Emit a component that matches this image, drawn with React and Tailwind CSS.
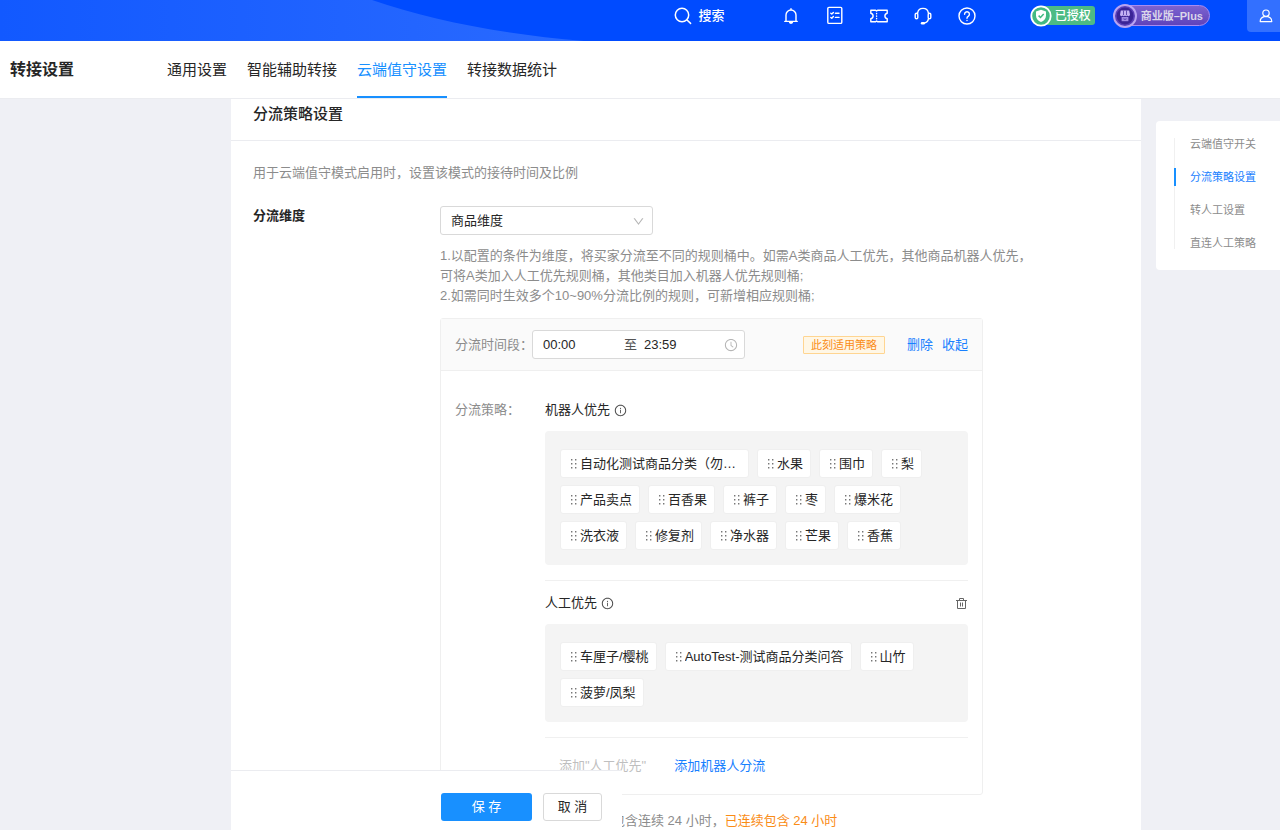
import React, { useState } from "react";
import { AiOutlineInfoCircle, AiOutlineDown, AiOutlineClockCircle } from "react-icons/ai";

const tabs = ["通用设置", "智能辅助转接", "云端值守设置", "转接数据统计"];
const anchors = ["云端值守开关", "分流策略设置", "转人工设置", "直连人工策略"];
const robotTags = [
  "自动化测试商品分类（勿动）", "水果", "围巾", "梨",
  "产品卖点", "百香果", "裤子", "枣", "爆米花",
  "洗衣液", "修复剂", "净水器", "芒果", "香蕉",
];
const humanTags = ["车厘子/樱桃", "AutoTest-测试商品分类问答", "山竹", "菠萝/凤梨"];

function HeaderIcon({ label, children }) {
  return (
    <button type="button" aria-label={label} className="flex h-5 w-5 items-center justify-center text-white">
      <svg viewBox="0 0 20 20" className="h-5 w-5" fill="none" stroke="currentColor" strokeWidth="1.4" strokeLinecap="round" strokeLinejoin="round">
        {children}
      </svg>
    </button>
  );
}

function TopBar() {
  return (
    <header className="relative flex h-[41px] shrink-0 items-start justify-end overflow-hidden bg-[#004bff]">
      <svg className="absolute left-0 top-0 h-[41px] w-[600px]" viewBox="0 0 600 41" aria-hidden="true">
        <defs>
          <linearGradient id="wave" x1="0" x2="1" y1="0" y2="0">
            <stop offset="0" stopColor="#1259ff" />
            <stop offset="1" stopColor="#2a6aff" />
          </linearGradient>
        </defs>
        <path d="M0 0H372C430 20 500 34 584 41H0Z" fill="url(#wave)" />
      </svg>
      <div className="relative flex h-[31px] items-center">
        <button type="button" className="mr-[56px] flex items-center gap-1.5 text-[13px] font-medium text-white">
          <svg viewBox="0 0 20 20" className="h-5 w-5" fill="none" stroke="currentColor" strokeWidth="1.5" strokeLinecap="round" aria-hidden="true">
            <circle cx="9" cy="9" r="6.7" />
            <path d="M14 14l3.6 3.4" />
          </svg>
          搜索
        </button>
        <div className="flex items-center gap-6">
          <HeaderIcon label="通知">
            <path d="M3.8 15.4H16.2M5 15.2V9A5 5 0 0 1 15 9V15.2M10 3.8V2.8" />
            <path d="M8.4 15.6a1.6 1.6 0 0 0 3.2 0Z" fill="currentColor" />
          </HeaderIcon>
          <HeaderIcon label="任务">
            <rect x="2.8" y="1.4" width="14" height="16" rx="1.2" />
            <path d="M5.8 7.2l1 .9 1.6-1.7M5.8 11.4l1 .9 1.6-1.7M10.4 7.2h3.6M10.4 11.4h3.6" />
          </HeaderIcon>
          <HeaderIcon label="优惠券">
            <path d="M1.8 4.200H6.600l1 .9 1-.9h9.600v3c-1.500.4-2.300 1.500-2.300 2.800s.8 2.400 2.300 2.800v3H8.600l-1-.9-1 .9H1.800v-3c1.500-.4 2.300-1.500 2.300-2.800s-.8-2.400-2.300-2.800Z" />
            <path d="M7.600 7.400v.3M7.600 9.900v.3M7.600 12.400v.3" />
          </HeaderIcon>
          <HeaderIcon label="客服">
            <path d="M4.600 7.200C5 4.200 7.200 2.400 10 2.400s5 1.800 5.400 4.800M15.400 12.800c-.4 2.200-1.900 3.900-4.400 4.300" />
            <rect x="2.200" y="7.200" width="2.600" height="5.600" rx="1.300" />
            <rect x="15.200" y="7.200" width="2.600" height="5.600" rx="1.300" />
            <path d="M9 17.200h1.800" strokeWidth="2.400" />
          </HeaderIcon>
          <HeaderIcon label="帮助">
            <circle cx="10" cy="10" r="8" />
            <path d="M7.600 8.200a2.400 2.400 0 1 1 3.600 2.100c-.8.500-1.200.9-1.200 1.900M10 14.400v.2" />
          </HeaderIcon>
        </div>
        <div className="relative ml-[53px] flex h-[22px] items-center">
          <svg viewBox="0 0 22 22" className="relative z-10 h-[22px] w-[22px]" aria-hidden="true">
            <circle cx="11" cy="11" r="9.700" fill="#42b983" stroke="#fff" strokeWidth="1.800" />
            <path d="M11 4.800l5 1.700v4.200c0 3-2 5-5 6.300-3-1.300-5-3.300-5-6.300V6.500Z" fill="#fff" />
            <path d="M8.600 10.600l1.900 1.900 3.200-3.400" fill="none" stroke="#42b983" strokeWidth="1.500" />
          </svg>
          <span className="-ml-2 flex h-[19px] items-center rounded-r-[3px] bg-[#4dbb84] pl-[11px] pr-1 text-[12px] font-medium text-white">已授权</span>
        </div>
        <div className="ml-[18px] flex h-6 items-center">
          <svg viewBox="0 0 24 24" className="relative z-10 h-6 w-6" aria-hidden="true">
            <circle cx="12" cy="12" r="11" fill="#5a40b8" stroke="#b8a4f2" strokeWidth="2" />
            <circle cx="12" cy="12" r="8.400" fill="#3a2496" />
            <path d="M7.800 6.600h8.400l.8 4.200a1.400 1.400 0 0 1-2.500.8 1.500 1.500 0 0 1-2.500 0 1.500 1.500 0 0 1-2.500 0 1.400 1.400 0 0 1-2.500-.8Z" fill="#c4b2f4" />
            <path d="M8.600 13h6.800v4.200H8.600Z" fill="#a08be4" />
            <path d="M10.500 6.600v4.600M13.500 6.600v4.600" stroke="#3a2496" strokeWidth=".7" />
            <path d="M10.500 14.800q1.500 1.200 3 0" fill="none" stroke="#3a2496" strokeWidth=".8" />
          </svg>
          <span className="-ml-3 flex h-[21px] items-center rounded-r-full border border-[#a98bf0] bg-linear-to-b from-[#7d63cf] to-[#5f43bb] pl-[15px] pr-1.5 text-[11px] font-bold text-[#dad5ea]">商业版–Plus</span>
        </div>
        <button type="button" aria-label="用户" className="ml-[37px] flex h-8 w-[33px] items-center justify-center self-start rounded-bl bg-[#3370ff] pl-1 text-white">
          <svg viewBox="0 0 16 16" className="h-4 w-4" fill="none" stroke="currentColor" strokeWidth="1.200" strokeLinejoin="round" aria-hidden="true">
            <circle cx="8" cy="5.200" r="3.200" />
            <path d="M2.200 13.600c0-2.600 1.800-4.400 3.900-5h3.800c2.100.6 3.900 2.400 3.900 5Z" />
          </svg>
        </button>
      </div>
    </header>
  );
}

function Tag({ text }) {
  return (
    <li className="flex h-[29px] items-center gap-[2px] rounded-[3px] border border-[#efefef] bg-white pl-[9px] pr-[7px] pt-px text-[13px] text-[#262626]">
      <svg viewBox="0 0 8 10" className="h-2.5 w-2 shrink-0" fill="#777" aria-hidden="true">
        <path d="M1 0h1.400v1.400H1zM5 0h1.400v1.400H5zM1 4h1.400v1.400H1zM5 4h1.400v1.400H5zM1 8h1.400v1.400H1zM5 8h1.400v1.400H5z" />
      </svg>
      <span className="max-w-[161px] truncate">{text}</span>
    </li>
  );
}

function TagGroup({ title, tags, removable }) {
  return (
    <section className="mb-[15px] border-b border-[#f0f0f0] pb-[15px]">
      <div className="flex h-[14px] items-center justify-between">
        <h3 className="flex items-center gap-1 text-[13px] text-[#262626]">
          {title}
          <AiOutlineInfoCircle className="h-[13px] w-[13px] text-[#444]" />
        </h3>
        {removable && (
          <button type="button" aria-label="删除分组" className="text-[#666]">
            <svg viewBox="0 0 13 13" className="h-[13px] w-[13px]" fill="none" stroke="currentColor" aria-hidden="true">
              <path d="M1 3.500h11M4.500 3.500v-2h4v2M2.500 3.500v8h8v-8M5.500 5.500v4M7.500 5.500v4" />
            </svg>
          </button>
        )}
      </div>
      <ul className="mt-[14px] flex flex-wrap gap-x-2 gap-y-[7px] rounded bg-[#f4f4f4] px-[15px] pb-[15px] pt-[18px]">
        {tags.map((t) => (
          <Tag key={t} text={t} />
        ))}
      </ul>
    </section>
  );
}

export default function App() {
  const [start, setStart] = useState("00:00");
  const [end, setEnd] = useState("23:59");
  return (
    <div className="flex h-screen flex-col overflow-hidden bg-[#eff0f5] font-['Liberation_Sans','Noto_Sans_CJK_SC',sans-serif] text-[13px] leading-5 text-[#262626]">
      <TopBar />
      <div className="flex h-[58px] shrink-0 items-stretch border-b border-[#ebecf0] bg-white pl-2.5">
        <h1 className="flex w-[157px] items-center text-[16px] font-bold">转接设置</h1>
        <nav className="flex gap-5 text-[15px]">
          {tabs.map((t, i) => (
            <a key={t} href="#" className={i === 2 ? "flex items-center border-b-2 border-[#1890ff] pt-0.5 text-[#1890ff]" : "flex items-center border-b-2 border-transparent pt-0.5"}>
              {t}
            </a>
          ))}
        </nav>
      </div>
      <main className="flex min-h-0 flex-1 items-start gap-[15px] pl-[231px]">
        <div className="relative h-full min-w-0 flex-1 overflow-hidden bg-white">
          <h2 className="border-b border-[#ebecf0] px-[22px] pb-4 pt-[5px] text-[15px] font-medium">分流策略设置</h2>
          <div className="px-[22px] pt-[22px]">
            <p className="text-[#8c8c8c]">用于云端值守模式启用时，设置该模式的接待时间及比例</p>
            <div className="mt-[23px] flex">
              <label htmlFor="dimension" className="w-[187px] shrink-0 font-bold">分流维度</label>
              <div className="min-w-0 flex-1">
                <div className="relative w-[213px]">
                  <select id="dimension" className="block h-[29px] w-full appearance-none rounded-[3px] border border-[#d9d9d9] bg-white pl-2.5 pr-7 text-[13px]">
                    <option>商品维度</option>
                  </select>
                  <AiOutlineDown className="pointer-events-none absolute right-2 top-[9px] h-[13px] w-[13px] text-[#b5b5b5]" />
                </div>
                <p className="mt-[11px] text-[#8c8c8c]">
                  1.以配置的条件为维度，将买家分流至不同的规则桶中。如需A类商品人工优先，其他商品机器人优先，
                  <br />
                  可将A类加入人工优先规则桶，其他类目加入机器人优先规则桶;
                  <br />
                  2.如需同时生效多个10~90%分流比例的规则，可新增相应规则桶;
                </p>
                <div className="mt-3 max-w-[543px] rounded-[3px] border border-[#efefef]">
                  <div className="flex h-[52px] items-center border-b border-[#efefef] bg-[#fafafa] px-[14px]">
                    <label htmlFor="start" className="w-[77px] whitespace-nowrap text-[#8c8c8c]">分流时间段：</label>
                    <div className="flex h-[29px] w-[213px] items-center rounded-[3px] border border-[#d9d9d9] bg-white px-2.5">
                      <input id="start" value={start} onChange={(e) => setStart(e.target.value)} className="w-[81px] outline-none" />
                      <span className="w-5 text-[#555]">至</span>
                      <input aria-label="结束时间" value={end} onChange={(e) => setEnd(e.target.value)} className="min-w-0 flex-1 outline-none" />
                      <AiOutlineClockCircle className="-mr-1 h-[14px] w-[14px] text-[#b5b5b5]" />
                    </div>
                    <span className="ml-auto mr-[22px] flex h-[18px] items-center rounded-[1px] border border-[#ffd591] bg-[#fff7e6] px-[7px] text-[11px] text-[#fa8c16]">此刻适用策略</span>
                    <button type="button" className="mr-[9px] text-[#1880ff]">删除</button>
                    <button type="button" className="text-[#1880ff]">收起</button>
                  </div>
                  <div className="flex px-[14px] pt-8">
                    <div className="w-[90px] shrink-0 leading-[14px] text-[#8c8c8c]">分流策略：</div>
                    <div className="min-w-0 flex-1">
                      <TagGroup title="机器人优先" tags={robotTags} />
                      <TagGroup title="人工优先" tags={humanTags} removable />
                      <div className="flex gap-7 pb-[18px] pl-[14px] pt-[3px]">
                        <button type="button" disabled className="text-[#bfbfbf]">添加"人工优先"</button>
                        <button type="button" className="text-[#1880ff]">添加机器人分流</button>
                      </div>
                    </div>
                  </div>
                </div>
                <p className="mt-4 pl-[172px] text-[#8c8c8c]">
                  包含连续 24 小时，<span className="text-[#fa8c16]">已连续包含 24 小时</span>
                </p>
              </div>
            </div>
          </div>
          <footer className="absolute bottom-0 left-0 flex h-[60px] w-[391px] items-start gap-[11px] border-t border-[#ebecf0] bg-white pl-[210px] pt-[22px]">
            <button type="button" className="h-7 w-[91px] rounded-[3px] bg-[#1890ff] text-white">保 存</button>
            <button type="button" className="h-7 w-[59px] rounded-[3px] border border-[#d9d9d9] bg-white">取 消</button>
          </footer>
        </div>
        <aside className="mt-[22px] w-[124px] shrink-0 rounded-l bg-white pb-[21px] pl-[18px] pt-[17px]">
          <nav className="flex flex-col gap-[21px] border-l border-[#f0f0f0] text-[11px] leading-3">
            {anchors.map((a, i) => (
              <a key={a} href="#" className={i === 1 ? "relative pl-[15px] text-[#1880ff] before:absolute before:-left-px before:-top-[3px] before:h-[18px] before:w-0.5 before:bg-[#1890ff]" : "pl-[15px] text-[#8c8c8c]"}>
                {a}
              </a>
            ))}
          </nav>
        </aside>
      </main>
    </div>
  );
}
